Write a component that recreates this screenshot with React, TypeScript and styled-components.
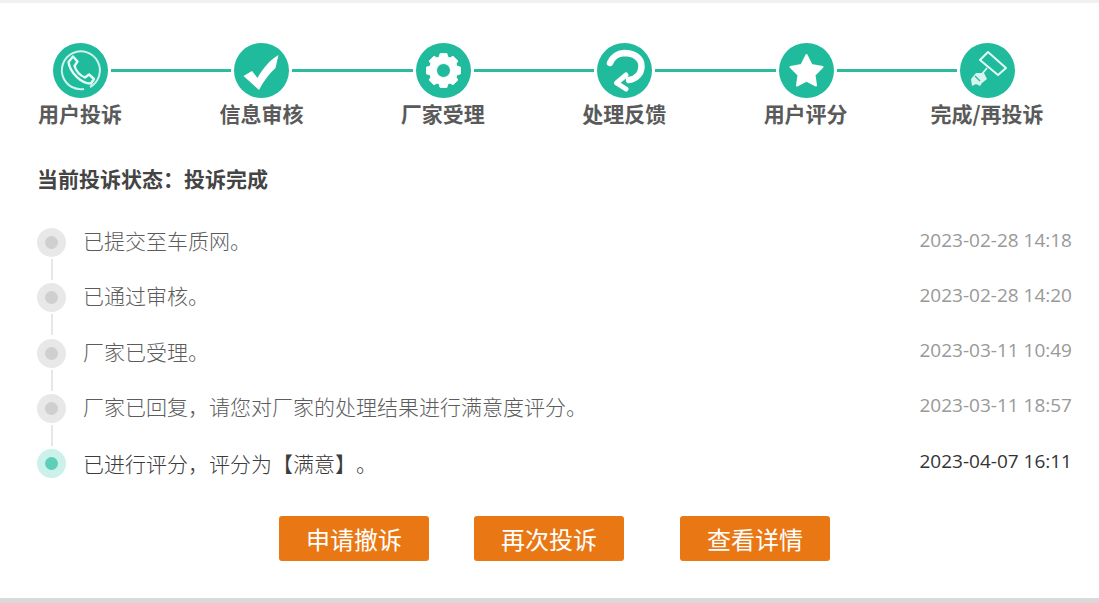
// App.tsx
import React, { ReactNode } from "react";
import styled, { createGlobalStyle } from "styled-components";

const GlobalStyle = createGlobalStyle`
  html, body {
    margin: 0;
    padding: 0;
    background: #fff;
    font-family: "Open Sans", "Noto Sans CJK SC", sans-serif;
  }
`;

const Page = styled.div`
  box-sizing: border-box;
  width: 1099px;
  height: 603px;
  padding: 40px 0 0 37px;
  border-top: 3px solid #f0f0f0;
  border-bottom: 5px solid #d9d9d9;
  background: #fff;
`;

// Progress steps across the top
const Steps = styled.div`
  display: flex;
  padding: 0 84px 0 16px;
`;

const Step = styled.div`
  display: flex;
  flex-direction: column;
  align-items: center;
  width: 55px;
  flex: none;
`;

const StepCircle = styled.div`
  width: 55px;
  height: 55px;
  border-radius: 50%;
  background: #20bb9c;
  flex: none;
`;

const StepLabel = styled.div`
  margin-top: 0;
  padding-right: 1px;
  white-space: nowrap;
  font-family: "Noto Sans CJK SC", sans-serif;
  font-size: 21px;
  line-height: 30px;
  font-weight: 700;
  color: #5a5a5a;
`;

const Connector = styled.div`
  flex: 1;
  height: 3px;
  margin: 26px 3px 0;
  background: #2fb99d;
`;

const Status = styled.div`
  margin-top: 35px;
  font-family: "Noto Sans CJK SC", sans-serif;
  font-size: 21px;
  line-height: 30px;
  font-weight: 700;
  color: #444;
`;

// Timeline list
const Timeline = styled.div`
  margin-top: 22px;
  padding-right: 27px;
`;

const Row = styled.div`
  position: relative;
  display: flex;
  align-items: center;
  height: 55.25px;

  &:not(:last-child)::after {
    content: "";
    position: absolute;
    left: 13.5px;
    top: 44px;
    width: 2px;
    height: 21px;
    background: #e6e6e6;
  }
`;

const Dot = styled.div<{ $active?: boolean }>`
  display: flex;
  align-items: center;
  justify-content: center;
  width: 29px;
  height: 29px;
  flex: none;
  border-radius: 50%;
  background: ${(p) => (p.$active ? "#ccf1ea" : "#e8e8e8")};

  &::before {
    content: "";
    width: 13px;
    height: 13px;
    border-radius: 50%;
    background: ${(p) => (p.$active ? "#5fceb8" : "#cfcfcf")};
  }
`;

const RowText = styled.div<{ $active?: boolean }>`
  flex: 1;
  margin: 0 0 ${(p) => (p.$active ? 2 : 5)}px 17px;
  font-family: "Noto Sans CJK SC", sans-serif;
  font-size: 21px;
  font-weight: 300;
  text-spacing-trim: space-all;
  color: ${(p) => (p.$active ? "#3c3c3c" : "#5c5c5c")};
`;

const RowTime = styled.div<{ $active?: boolean }>`
  margin-bottom: 6px;
  font-size: 19px;
  color: ${(p) => (p.$active ? "#333" : "#999")};
`;

const Actions = styled.div`
  display: flex;
  margin-top: 25px;
  padding-left: 242px;
`;

const ActionButton = styled.button<{ $gap?: number }>`
  width: 150px;
  height: 45px;
  margin-right: ${(p) => p.$gap ?? 0}px;
  padding: 0;
  border: none;
  border-radius: 3px;
  background: #e97814;
  color: #fff;
  font-family: "Noto Sans CJK SC", sans-serif;
  font-size: 24px;
  font-weight: 400;
  line-height: 45px;
`;

const Glyph = styled.svg`
  display: block;
  width: 55px;
  height: 55px;
`;

// Builds the eight-toothed outline of the gear around the icon's centre
const gearOutline = () => {
  const points: string[] = [];
  for (let i = 0; i < 8; i++) {
    const mid = (i * Math.PI) / 4;
    [
      [14.2, -0.3],
      [17.2, -0.2],
      [17.2, 0.2],
      [14.2, 0.3],
    ].forEach(([r, off]) => {
      const x = 27.5 + r * Math.cos(mid + off);
      const y = 27.5 + r * Math.sin(mid + off);
      points.push(`${x.toFixed(2)} ${y.toFixed(2)}`);
    });
  }
  return `M${points.join(" L")} Z`;
};

const PhoneIcon = () => (
  <Glyph viewBox="0 0 55 55">
    <path
      d="M10.5 35 A19 19 0 1 1 37 44 M31 46 A19 19 0 0 1 10.5 35"
      fill="none"
      stroke="#cdf3ea"
      strokeWidth="2"
    />
    <path
      d="M20 13.5 L24.5 18.5 L21.5 23 C23 28 27 32.5 32 34.5 L36 31.5 L41 36 L38 40.5 C29 41 17 30 15.5 19 Z"
      fill="none"
      stroke="#e4faf5"
      strokeWidth="2.4"
      strokeLinejoin="round"
    />
  </Glyph>
);

const CheckIcon = () => (
  <Glyph viewBox="0 0 55 55">
    <path d="M9.5 33 L18 28 L23.5 35 C29 25 36 17 44.5 12 L41.5 25 C35 31 29 39 25 47 Z" fill="#fff" />
  </Glyph>
);

const GearIcon = () => (
  <Glyph viewBox="0 0 55 55">
    <path
      fillRule="evenodd"
      fill="#fff"
      stroke="#fff"
      strokeWidth="1"
      strokeLinejoin="round"
      d={`${gearOutline()} M27.5 20.5 A7 7 0 1 0 27.5 34.5 A7 7 0 1 0 27.5 20.5 Z`}
    />
  </Glyph>
);

const RefreshIcon = () => (
  <Glyph viewBox="0 0 55 55">
    <path
      d="M13 20 A16 16 0 0 1 27 10 C37 10 44.5 15 44.5 23 C44.5 31 39 36 32 37"
      fill="none"
      stroke="#fff"
      strokeWidth="6.5"
      strokeLinecap="round"
    />
    <path
      d="M29 32 L19.5 40 L29 46"
      fill="none"
      stroke="#fff"
      strokeWidth="5"
      strokeLinecap="round"
      strokeLinejoin="round"
    />
  </Glyph>
);

const StarIcon = () => (
  <Glyph viewBox="0 0 55 55">
    <path
      d="M27.5 12 L32.5 22 L43.5 24 L35.5 32 L37 42.5 L27.5 37.5 L18 42.5 L19.5 32 L11.5 24 L22.5 22 Z"
      fill="#fff"
      stroke="#fff"
      strokeWidth="2"
      strokeLinejoin="round"
    />
  </Glyph>
);

const RollerIcon = () => (
  <Glyph viewBox="0 0 55 55">
    <path d="M28 9 L46 25 L38 32 L20 17 Z" fill="none" stroke="#e4faf5" strokeWidth="2" strokeLinejoin="round" />
    <path d="M27 25 L22 31" fill="none" stroke="#e4faf5" strokeWidth="1.6" />
    <path d="M11 36 L16 30 L24 30 L27 36 L22 40 L20 43 L16 41 L12 43 Z" fill="#d7f5ee" />
    <path d="M15 33 L20 38" stroke="#20bb9c" strokeWidth="1.2" />
  </Glyph>
);

interface StepInfo {
  label: string;
  icon: ReactNode;
}

const steps: StepInfo[] = [
  { label: "用户投诉", icon: <PhoneIcon /> },
  { label: "信息审核", icon: <CheckIcon /> },
  { label: "厂家受理", icon: <GearIcon /> },
  { label: "处理反馈", icon: <RefreshIcon /> },
  { label: "用户评分", icon: <StarIcon /> },
  { label: "完成/再投诉", icon: <RollerIcon /> },
];

const records = [
  { text: "已提交至车质网。", time: "2023-02-28 14:18" },
  { text: "已通过审核。", time: "2023-02-28 14:20" },
  { text: "厂家已受理。", time: "2023-03-11 10:49" },
  { text: "厂家已回复，请您对厂家的处理结果进行满意度评分。", time: "2023-03-11 18:57" },
  { text: "已进行评分，评分为【满意】。", time: "2023-04-07 16:11", active: true },
];

const App: React.FC = () => (
  <>
    <GlobalStyle />
    <Page>
      <Steps>
        {steps.map((step, i) => (
          <React.Fragment key={step.label}>
            {i > 0 && <Connector />}
            <Step>
              <StepCircle>{step.icon}</StepCircle>
              <StepLabel>{step.label}</StepLabel>
            </Step>
          </React.Fragment>
        ))}
      </Steps>
      <Status>当前投诉状态：投诉完成</Status>
      <Timeline>
        {records.map((r) => (
          <Row key={r.time}>
            <Dot $active={r.active} />
            <RowText $active={r.active}>{r.text}</RowText>
            <RowTime $active={r.active}>{r.time}</RowTime>
          </Row>
        ))}
      </Timeline>
      <Actions>
        <ActionButton $gap={45}>申请撤诉</ActionButton>
        <ActionButton $gap={56}>再次投诉</ActionButton>
        <ActionButton>查看详情</ActionButton>
      </Actions>
    </Page>
  </>
);

export default App;
